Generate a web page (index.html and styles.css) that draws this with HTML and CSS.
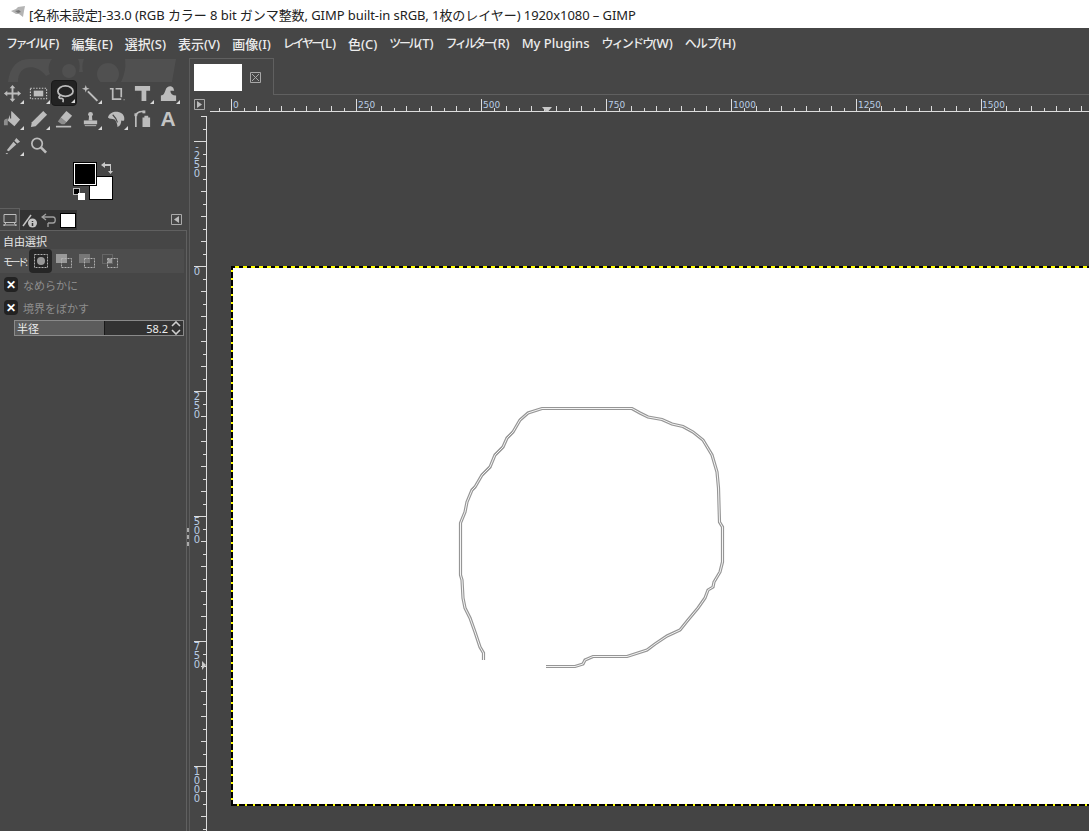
FILE: index.html
```html
<!DOCTYPE html>
<html lang="ja">
<head>
  <meta charset="UTF-8">
  <title>GIMP</title>
  <link rel="stylesheet" href="styles.css">
</head>
<body>

  <!-- Window title -->
  <div class="titlebar">
    <svg class="app-icon" width="16" height="12" viewBox="0 0 16 12"><path d="M1 5 L6 3 L8 1 L15 0 L14 5 L13 11 L9 8 L6 8 Z" fill="#b4b4b4"/><path d="M5 5 L9 4 L11 6 L8 7 Z" fill="#777"/></svg>
    <span>[名称未設定]-33.0 (RGB カラー 8 bit ガンマ整数, GIMP built-in sRGB, 1枚のレイヤー) 1920x1080 – GIMP</span>
  </div>

  <!-- Menu -->
  <div class="menubar">
    <span><i class="kana">ファイル</i>(F)</span>
    <span>編集(E)</span>
    <span>選択(S)</span>
    <span>表示(V)</span>
    <span>画像(I)</span>
    <span><i class="kana">レイヤー</i>(L)</span>
    <span>色(C)</span>
    <span><i class="kana">ツール</i>(T)</span>
    <span><i class="kana">フィルター</i>(R)</span>
    <span>My Plugins</span>
    <span><i class="kana wide">ウィンドウ</i>(W)</span>
    <span><i class="kana wider">ヘルプ</i>(H)</span>
  </div>

  <div class="main">

    <!-- Left dock -->
    <div class="dock">
      <div class="toolbox">
        <svg class="wilber" width="186" height="24" viewBox="0 0 186 24">
          <path d="M8 24 C10 8 18 1 30 1 L52 1 C48 6 48 12 50 16 L46 18 C40 10 32 8 26 10 C20 12 18 18 18 24 Z" fill="#505050"/>
          <circle cx="69" cy="13" r="7" fill="#505050"/>
          <path d="M78 1 L84 1 C82 6 82 10 83 14 L79 14 C80 9 80 5 78 1 Z" fill="#505050"/>
          <circle cx="108" cy="16" r="11" fill="#505050"/>
          <path d="M125 1 L176 1 L172 24 L121 24 C125 16 126 8 125 1 Z" fill="#505050"/>
        </svg>
        <div class="tools">
          <div class="tool has-menu"><svg viewBox="0 0 20 20"><path d="M10 1 l3 3.5 h-2 v4.5 h4.5 v-2 l3.5 3 -3.5 3 v-2 h-4.5 v4.5 h2 l-3 3.5 -3 -3.5 h2 v-4.5 h-4.5 v2 l-3.5 -3 3.5 -3 v2 h4.5 v-4.5 h-2 z"/></svg></div>
          <div class="tool has-menu"><svg viewBox="0 0 20 20"><rect x="1.5" y="4.5" width="17" height="11" class="dash"/><rect x="5" y="7" width="10" height="6"/></svg></div>
          <div class="tool has-menu active"><svg viewBox="0 0 20 20"><ellipse cx="11" cy="7.5" rx="8" ry="5.5" class="line"/><path d="M6 12 C3 13 4 16 7 15 C9 15 9 18 8 19" class="line"/></svg></div>
          <div class="tool has-menu"><svg viewBox="0 0 20 20"><path d="M8 7 L18 17 L16.5 18.5 L6.5 8.5 Z"/><path d="M5 1 L6 4 L9 5 L6 6 L5 9 L4 6 L1 5 L4 4 Z"/></svg></div>
          <div class="tool"><svg viewBox="0 0 20 20"><path d="M3 5 H7 M6 5 V16 H15 M9 5 H15 V14" class="line"/><path d="M17.5 16 h1 v1 h-1 z"/></svg></div>
          <div class="tool has-menu"><svg viewBox="0 0 20 20"><path d="M2 2 H18 V7 H14 V18 H9 V7 H2 Z"/><path d="M8 9 C4 9 3 12 5 14 L7 15" class="dark"/></svg></div>
          <div class="tool has-menu"><svg viewBox="0 0 20 20"><path d="M2 18 V12 C5 12 6 9 7 6 C8 2 13 1 15 4 L16 7 L12 7 C12 10 14 12 18 12 V18 Z"/></svg></div>
          <div class="tool has-menu"><svg viewBox="0 0 20 20"><path d="M9 1 L18 10 L12 17 L5 11 Z"/><path d="M8 2 L8 9" class="dark"/><path d="M1 12 C1 10 3 9 5 9 L5 16 L1 16 Z" fill-opacity=".6"/></svg></div>
          <div class="tool has-menu"><svg viewBox="0 0 20 20"><path d="M15 1 L19 5 L7 17 L2 18 L3 13 Z"/></svg></div>
          <div class="tool"><svg viewBox="0 0 20 20"><path d="M12 1 L18 6 L12 13 L6 8 Z"/><path d="M6 8 L12 13 L10 15 L7 15 L3 12 Z" fill-opacity=".6"/><path d="M1 17.5 H17" class="line"/></svg></div>
          <div class="tool has-menu"><svg viewBox="0 0 20 20"><circle cx="10" cy="4.5" r="2.5"/><path d="M8.5 6 H11.5 L12 11 H8 Z"/><path d="M3 11 H17 V15 H3 Z"/><path d="M4 16 H16 V17 H4 Z"/></svg></div>
          <div class="tool has-menu"><svg viewBox="0 0 20 20"><path d="M1 8 C2 3 8 1 12 2 C17 3 19 7 18 11 C17 12 16 11 15 11 C15 14 14 17 11 18 C11 15 10 12 8 10 C5 9 3 10 1 8 Z"/><path d="M6 5 C8 7 10 9 11 13" class="dark"/></svg></div>
          <div class="tool"><svg viewBox="0 0 20 20"><path d="M3 18 V6 M3 5 C5 2 9 1 12 2" class="line"/><rect x="1.5" y="3.5" width="3" height="3"/><rect x="10" y="0.5" width="3" height="3"/><path d="M12 6 H16 V8 H18 V18 H10 V8 H12 Z"/></svg></div>
          <div class="tool glyph">A</div>
          <div class="tool has-menu"><svg viewBox="0 0 20 20"><path d="M14 2 L18 6 L15 8 L12 5 Z"/><path d="M11 6 L14 9 L6 16 L4 15 Z"/><path d="M3 18 h2 v1 h-2 z"/></svg></div>
          <div class="tool"><svg viewBox="0 0 20 20"><circle cx="8.5" cy="8" r="5.5" class="line"/><path d="M12.5 12 L18 17.5" class="thick"/></svg></div>
        </div>
        <div class="colors">
          <div class="bg-color"></div>
          <div class="fg-color"></div>
          <svg class="swap" width="12" height="12" viewBox="0 0 12 12"><path d="M0 3 L4 0 V2 H10 V9 H12 L9.5 12 L7 9 H9 V4 H4 V6 Z" fill="#c8c8c8"/></svg>
          <div class="mini-fg"></div>
          <div class="mini-bg"></div>
        </div>
      </div>

      <div class="dock-tabs">
        <div class="dock-tab current"><svg width="16" height="15" viewBox="0 0 16 15"><path d="M2 2.5 H14 V10.5 H2 Z M4 10.5 L2 14 M12 10.5 L14 14 M1 13 H15" fill="none" stroke="#bcbcbc"/></svg></div>
        <div class="dock-tab"><svg width="16" height="15" viewBox="0 0 16 15"><path d="M1 13 L9 2" stroke="#c4c4c4" stroke-width="1.5"/><circle cx="10.5" cy="10" r="4.5" fill="#c4c4c4"/><path d="M10.5 8 V9 M10.5 10 V13" stroke="#333" stroke-width="1.5"/></svg></div>
        <div class="dock-tab"><svg width="16" height="15" viewBox="0 0 16 15"><path d="M5 1 L1 4 L5 7 M1 4 H12 C15 4 15 10 12 10 H7 M7 10 V14" fill="none" stroke="#a0a0a0" stroke-width="1.3"/></svg></div>
        <div class="dock-tab"><div class="swatch"></div></div>
        <svg class="dock-config" width="11" height="11" viewBox="0 0 11 11"><path d="M.5 .5 H10.5 V10.5 H.5 Z" fill="none" stroke="#aaa"/><path d="M8 2 V9 L3 5.5 Z" fill="#bbb"/></svg>
      </div>

      <div class="options">
        <div class="options-title">自由選択</div>
        <div class="mode-row">
          <span class="mode-label">モード:</span>
          <div class="mode active"><svg width="16" height="16" viewBox="0 0 16 16"><rect x="1.5" y="1.5" width="13" height="13" class="mode-dash"/><circle cx="8" cy="8" r="4" fill="#999"/></svg></div>
          <div class="mode"><svg width="16" height="16" viewBox="0 0 16 16"><rect x="0" y="1" width="11" height="9" fill="#999"/><rect x="5.5" y="5.5" width="10" height="9" fill="#666" class="mode-dash"/></svg></div>
          <div class="mode"><svg width="16" height="16" viewBox="0 0 16 16"><rect x="0" y="1" width="11" height="9" fill="#777"/><rect x="5.5" y="5.5" width="10" height="9" fill="#474747" class="mode-dash"/></svg></div>
          <div class="mode"><svg width="16" height="16" viewBox="0 0 16 16"><rect x="0.5" y="1.5" width="10" height="9" fill="none" stroke="#666"/><rect x="5.5" y="5.5" width="10" height="9" fill="none" class="mode-dash"/><rect x="6" y="6" width="4" height="4" fill="#999"/></svg></div>
        </div>
        <div class="check-row"><span class="check">✕</span><span>なめらかに</span></div>
        <div class="check-row"><span class="check">✕</span><span>境界をぼかす</span></div>
        <div class="spin-slider">
          <div class="spin-fill"></div>
          <span class="spin-label">半径</span>
          <span class="spin-value">58.2</span>
          <svg class="spin-arrows" width="10" height="14" viewBox="0 0 10 14"><path d="M1 5 L5 1 L9 5 M1 9 L5 13 L9 9" fill="none" stroke="#d0d0d0" stroke-width="1.6"/></svg>
        </div>
      </div>
    </div>

    <div class="paned"><i></i><i></i><i></i></div>

    <!-- Image window -->
    <div class="editor">
      <div class="image-tabs">
        <div class="image-tab">
          <div class="thumb"></div>
          <svg class="tab-close" width="11" height="11" viewBox="0 0 11 11"><path d="M.5 .5 H10.5 V10.5 H.5 Z M2 2 L9 9 M9 2 L2 9" fill="none" stroke="#a8a8a8"/></svg>
        </div>
      </div>

      <div class="ruler-row">
        <div class="ruler-corner">
          <svg width="11" height="11" viewBox="0 0 11 11"><path d="M.5 .5 H10.5 V10.5 H.5 Z" fill="none" stroke="#aaa"/><path d="M3 2 V9 L8 5.5 Z" fill="#bbb"/></svg>
        </div>
        <svg class="hruler" width="882" height="17">
          <defs>
            <pattern id="hticks" width="125" height="17" patternUnits="userSpaceOnUse" patternTransform="translate(24 0)">
              <path d="M.5 4 V16 M25.5 11 V16 M50.5 11 V16 M75.5 11 V16 M100.5 11 V16 M13.5 13 V16 M38.5 13 V16 M63.5 13 V16 M88.5 13 V16 M113.5 13 V16" stroke="#dcdcdc"/>
            </pattern>
          </defs>
          <rect x="3" y="0" width="879" height="17" fill="url(#hticks)"/>
          <rect x="3" y="16" width="879" height="1" fill="#dcdcdc"/>
          <path d="M335 12 H345 L341.5 16 H338.5 Z" fill="#c8c8c8"/>
          <g class="ruler-text">
            <text x="26" y="13">0</text>
            <text x="151" y="13">250</text>
            <text x="276" y="13">500</text>
            <text x="401" y="13">750</text>
            <text x="526" y="13">1000</text>
            <text x="651" y="13">1250</text>
            <text x="775" y="13">1500</text>
          </g>
        </svg>
      </div>

      <div class="canvas-row">
        <svg class="vruler" width="17" height="719">
          <defs>
            <pattern id="vticks" width="17" height="125" patternUnits="userSpaceOnUse" patternTransform="translate(0 29)">
              <path d="M4 .5 H16 M11 25.5 H16 M11 50.5 H16 M11 75.5 H16 M11 100.5 H16 M13 13.5 H16 M13 38.5 H16 M13 63.5 H16 M13 88.5 H16 M13 113.5 H16" stroke="#dcdcdc"/>
            </pattern>
          </defs>
          <rect x="0" y="4" width="17" height="715" fill="url(#vticks)"/>
          <rect x="16" y="4" width="1" height="715" fill="#dcdcdc"/>
          <path d="M12 549 L16 553 L12 558 Z" fill="#c8c8c8"/>
          <g class="ruler-text vertical" text-anchor="middle">
            <text x="7" y="38">-</text>
            <text x="7" y="47">2</text>
            <text x="7" y="56">5</text>
            <text x="7" y="65">0</text>
            <text x="7" y="163">0</text>
            <text x="7" y="288">2</text>
            <text x="7" y="297">5</text>
            <text x="7" y="306">0</text>
            <text x="7" y="413">5</text>
            <text x="7" y="422">0</text>
            <text x="7" y="431">0</text>
            <text x="7" y="538">7</text>
            <text x="7" y="547">5</text>
            <text x="7" y="556">0</text>
            <text x="7" y="663">1</text>
            <text x="7" y="672">0</text>
            <text x="7" y="681">0</text>
            <text x="7" y="690">0</text>
          </g>
        </svg>
        <div class="canvas">
          <div class="image">
            <svg class="stroke" width="960" height="539" viewBox="231 266 960 539">
              <defs>
                <path id="outline" d="M483.5 660 L483.5 653 L480 647 L475 632 L470 618 L465 608 L463 598 L462 580 L460.5 575 L460.5 523 L465 512 L467 502 L472 490 L475 487 L482 475 L490 467 L495 455 L503 447 L507 438 L513 432 L520 420 L528 413 L542 408.5 L632 408.5 L640 413 L648 417 L662 419.5 L672 424 L683 426.5 L693 432 L703 440 L712 455 L717 472 L718.5 488 L719.5 522 L722.5 527 L722.5 562 L720 572 L714 582 L713 587 L708 590 L705 598 L698 608 L688 620 L680 630 L667 636 L655 644 L647 650 L627 656.5 L593 656.5 L585 660 L583 664 L575 666.5 L546 666.5"/>
              </defs>
              <use href="#outline" fill="none" stroke="#969696" stroke-width="3.2"/>
              <use href="#outline" fill="none" stroke="#f4f4f4" stroke-width="1"/>
            </svg>
          </div>
        </div>
      </div>
    </div>

  </div>

</body>
</html>
```

FILE: styles.css
```css
/* Reset and Global Styles */
* { margin: 0; padding: 0; box-sizing: border-box; }
html, body {
  width: 1089px;
  height: 831px;
  overflow: hidden;
}
body {
  display: flex;
  flex-direction: column;
  font-family: "Noto Sans", "Noto Sans CJK JP", sans-serif;
  background: #464646;
  color: #e8e8e8;
}

/* Title bar */
.titlebar {
  height: 28px;
  flex-shrink: 0;
  background: #fff;
  color: #222;
  display: flex;
  align-items: center;
  gap: 3px;
  padding-left: 10px;
  font-size: 13px;
  letter-spacing: -0.07px;
  white-space: nowrap;
}
.app-icon { margin-top: -4px; }

/* Menu bar */
.menubar {
  height: 30px;
  flex-shrink: 0;
  display: flex;
  align-items: center;
  gap: 12px;
  padding-left: 6px;
  font-size: 13px;
  font-weight: 500;
  color: #ececec;
  white-space: nowrap;
}
.kana {
  font-style: normal;
  font-size: 12px;
  letter-spacing: -2.4px;
}
.kana.wide { letter-spacing: -1.8px; }
.kana.wider { letter-spacing: -1px; }

.main {
  flex: 1;
  min-height: 0;
  display: flex;
}

/* Dock */
.dock {
  width: 187px;
  flex-shrink: 0;
  display: flex;
  flex-direction: column;
}
.toolbox {
  position: relative;
  height: 150px;
  padding-top: 22px;
}
.wilber { position: absolute; left: 0; top: 0; }
.tools {
  position: relative;
  display: grid;
  grid-template-columns: repeat(7, 26px);
  grid-auto-rows: 26px;
  margin-left: -1px;
}
.tool {
  position: relative;
  display: flex;
  align-items: center;
  justify-content: center;
  border-radius: 4px;
}
.tool svg { width: 19px; height: 19px; fill: #bcbcbc; }
.tool .line { fill: none; stroke: #bcbcbc; stroke-width: 1.8; }
.tool .thick { fill: none; stroke: #bcbcbc; stroke-width: 2.8; }
.tool .dark { fill: none; stroke: #464646; stroke-width: 1.2; }
.tool .dash { fill: none; stroke: #c8c8c8; stroke-width: 1.2; stroke-dasharray: 1.5 1.5; }
.tool.active { background: #232323; border: 1px solid #1a1a1a; }
.tool.has-menu::after {
  content: "";
  position: absolute;
  right: 1px;
  bottom: 2px;
  border-left: 4px solid transparent;
  border-bottom: 4px solid #d8d8d8;
}
.glyph {
  font-family: "Liberation Sans", sans-serif;
  font-size: 21px;
  font-weight: 700;
  color: #c4c4c4;
}

/* Foreground and background colours */
.colors {
  position: relative;
  width: 42px;
  height: 40px;
  margin: 4px 0 0 72px;
}
.fg-color {
  position: absolute;
  left: 2px;
  top: 1px;
  width: 22px;
  height: 22px;
  background: #000;
  border: 1px solid #fff;
  outline: 1px solid #000;
}
.bg-color {
  position: absolute;
  left: 18px;
  top: 15px;
  width: 22px;
  height: 22px;
  background: #fff;
  outline: 1px solid #000;
}
.swap { position: absolute; left: 29px; top: 0; }
.mini-fg {
  position: absolute;
  left: 2px;
  top: 27px;
  width: 5px;
  height: 5px;
  background: #000;
  outline: 1px solid #bbb;
}
.mini-bg {
  position: absolute;
  left: 6px;
  top: 31px;
  width: 7px;
  height: 7px;
  background: #fff;
}

/* Dock tabs */
.dock-tabs {
  height: 22px;
  flex-shrink: 0;
  display: flex;
  align-items: flex-end;
}
.dock-tab {
  width: 19px;
  height: 20px;
  display: flex;
  align-items: center;
  justify-content: center;
  background: #333;
}
.dock-tab.current {
  width: 20px;
  height: 22px;
  background: #464646;
  border-top: 1px solid #606060;
  border-right: 1px solid #606060;
}
.swatch {
  width: 16px;
  height: 15px;
  background: #fff;
  border: 1px solid #000;
}
.dock-config { margin: 0 5px 5px auto; }

/* Tool options */
.options {
  flex: 1;
  border-top: 1px solid #606060;
  border-right: 1px solid #606060;
  padding-top: 3px;
  font-size: 11px;
}
.options-title {
  height: 15px;
  line-height: 15px;
  padding-left: 3px;
  color: #e4e4e4;
}
.mode-row {
  height: 24px;
  display: flex;
  align-items: center;
  background: #4d4d4d;
  margin-right: 2px;
}
.mode-label {
  width: 29px;
  padding-left: 3px;
  font-size: 10px;
  white-space: nowrap;
  letter-spacing: -2.6px;
}
.mode {
  width: 23px;
  height: 24px;
  display: flex;
  align-items: center;
  justify-content: center;
  border-radius: 4px;
}
.mode.active { background: #262626; }
.mode-dash { fill: none; stroke: #b0b0b0; stroke-dasharray: 2 1; }
.check-row {
  height: 23px;
  display: flex;
  align-items: center;
  gap: 5px;
  padding-left: 4px;
  color: #8e8e8e;
}
.check-row:first-of-type { margin-top: 2px; }
.check {
  width: 14px;
  height: 15px;
  border-radius: 4px;
  background: #222;
  color: #fff;
  font-size: 12px;
  font-weight: 700;
  line-height: 15px;
  text-align: center;
}
.spin-slider {
  position: relative;
  height: 16px;
  margin: 1px 2px 0 14px;
  background: #333;
  border: 1px solid #8a8a8a;
  display: flex;
  align-items: center;
  justify-content: space-between;
  color: #ececec;
}
.spin-fill {
  position: absolute;
  left: 0;
  top: 0;
  bottom: 0;
  width: 90px;
  background: #5c5c5c;
  border-right: 1px solid #1a1a1a;
}
.spin-label { position: relative; padding-left: 2px; }
.spin-value { position: relative; margin-left: auto; margin-right: 3px; }
.spin-arrows { position: relative; margin-right: 2px; }

/* Sash between dock and image */
.paned {
  width: 2px;
  flex-shrink: 0;
  display: flex;
  flex-direction: column;
  justify-content: center;
  gap: 3px;
}
.paned i {
  display: block;
  width: 2px;
  height: 4px;
  background: #aaa;
  position: relative;
  top: 92px;
}

/* Image window */
.editor {
  flex: 1;
  min-width: 0;
  display: flex;
  flex-direction: column;
  border-left: 1px solid #5c5c5c;
}
.image-tabs {
  height: 37px;
  flex-shrink: 0;
  border-bottom: 1px solid #606060;
}
.image-tab {
  width: 84px;
  height: 37px;
  display: flex;
  align-items: center;
  background: #464646;
  border-top: 1px solid #606060;
  border-right: 1px solid #606060;
  padding: 0 0 0 4px;
}
.thumb {
  width: 48px;
  height: 27px;
  background: #fff;
}
.tab-close { margin-left: 8px; }

.ruler-row {
  height: 17px;
  flex-shrink: 0;
  display: flex;
}
.ruler-corner {
  width: 17px;
  padding: 4px 0 0 4px;
}
.ruler-corner svg { display: block; }
.hruler, .vruler { display: block; flex-shrink: 0; }
.ruler-text {
  font-family: "DejaVu Sans", sans-serif;
  font-size: 9px;
  fill: #b8cce4;
}
.ruler-text.vertical { font-size: 10px; }

.canvas-row {
  flex: 1;
  min-height: 0;
  display: flex;
}
.canvas {
  flex: 1;
  min-width: 0;
  overflow: hidden;
  padding: 154px 0 0 24px;
  background: #444;
}
.image {
  position: relative;
  width: 960px;
  height: 540px;
  background-color: #fff;
  background-image:
    repeating-linear-gradient(90deg, #000 0 4px, #ff0 4px 8px),
    repeating-linear-gradient(90deg, #000 0 6px, #ff0 6px 8px),
    repeating-linear-gradient(0deg, #000 0 6px, #ff0 6px 8px);
  background-size: 100% 2px, 100% 2px, 2px 100%;
  background-position: 0 0, 0 100%, 0 0;
  background-repeat: no-repeat;
}
.stroke { position: absolute; left: 0; top: 0; }
```
